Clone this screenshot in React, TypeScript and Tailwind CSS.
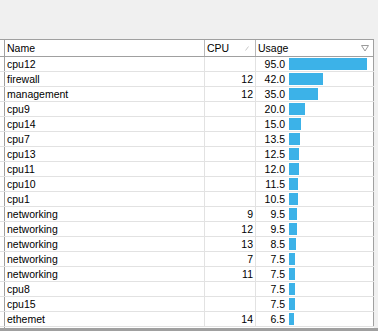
import React from "react";

interface Row {
  name: string;
  cpu: string;
  usage: number;
}

const rows: Row[] = [
  { name: "cpu12", cpu: "", usage: 95.0 },
  { name: "firewall", cpu: "12", usage: 42.0 },
  { name: "management", cpu: "12", usage: 35.0 },
  { name: "cpu9", cpu: "", usage: 20.0 },
  { name: "cpu14", cpu: "", usage: 15.0 },
  { name: "cpu7", cpu: "", usage: 13.5 },
  { name: "cpu13", cpu: "", usage: 12.5 },
  { name: "cpu11", cpu: "", usage: 12.0 },
  { name: "cpu10", cpu: "", usage: 11.5 },
  { name: "cpu1", cpu: "", usage: 10.5 },
  { name: "networking", cpu: "9", usage: 9.5 },
  { name: "networking", cpu: "12", usage: 9.5 },
  { name: "networking", cpu: "13", usage: 8.5 },
  { name: "networking", cpu: "7", usage: 7.5 },
  { name: "networking", cpu: "11", usage: 7.5 },
  { name: "cpu8", cpu: "", usage: 7.5 },
  { name: "cpu15", cpu: "", usage: 7.5 },
  { name: "ethemet", cpu: "14", usage: 6.5 },
];

export default function App() {
  return (
    <div
      className="w-[378px] h-[331px] bg-[#f0f0f0] pt-[39px] text-[10.5px] text-black leading-none overflow-hidden"
      style={{ fontFamily: '"Liberation Sans", Arial, sans-serif' }}
    >
      <div className="w-[374px] bg-white">
        {/* header */}
        <div className="flex h-[18px] border-t border-b border-[#a0a0a0]">
          <div className="w-[5px] border-r border-[#a0a0a0]"></div>
          <div className="w-[200px] border-r border-[#b8b8b8] flex items-center pl-[2px]">Name</div>
          <div className="w-[51px] border-r border-[#b8b8b8] flex items-center justify-between pl-[2px] pr-[6px]">
            <span>CPU</span>
            <svg width="4" height="5" viewBox="0 0 4 5">
              <path d="M0.5 4.5 L3.5 0.5" stroke="#c8c8c8" strokeWidth="1" fill="none" />
            </svg>
          </div>
          <div className="w-[118px] border-r border-[#a0a0a0] flex items-center justify-between pl-[2px] pr-[4px]">
            <span>Usage</span>
            <svg width="8" height="8" viewBox="0 0 8 8">
              <path d="M0.5 1.5 L7.5 1.5 L4 7 Z" stroke="#9a9a9a" strokeWidth="1" fill="none" />
            </svg>
          </div>
        </div>

        {rows.map((r, i) => (
          <div key={i} className="flex h-[15px] border-b border-[#e2e2e2]">
            <div className="w-[5px] border-r border-[#a0a0a0]"></div>
            <div className="w-[200px] border-r border-[#e2e2e2] flex items-center pl-[2px]">{r.name}</div>
            <div className="w-[51px] border-r border-[#e2e2e2] flex items-center justify-end pr-[2px]">{r.cpu}</div>
            <div className="w-[118px] border-r border-[#a0a0a0] flex items-center">
              <span className="w-[29px] text-right">{r.usage.toFixed(1)}</span>
              <div
                className="ml-[4px] h-[12px] bg-[#3cb2e8]"
                style={{ width: Math.round(r.usage * 0.82) }}
              ></div>
            </div>
          </div>
        ))}

        <div className="flex h-[1px]">
          <div className="w-[5px] border-r border-[#a0a0a0]"></div>
        </div>
      </div>
      <div className="w-[378px] h-[3px] bg-[#a0a0a0]"></div>
    </div>
  );
}
